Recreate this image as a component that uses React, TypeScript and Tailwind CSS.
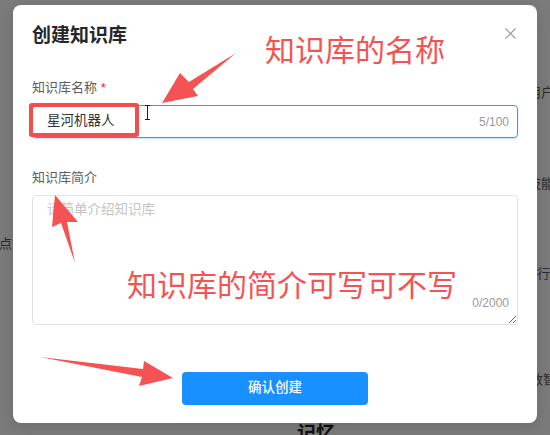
import React from 'react'

const RED = '#f55353'

export default function App() {
  return (
    <div className="relative w-[550px] h-[435px] overflow-hidden bg-[#7b7b7b] pl-[13px] pt-[5px] font-['Liberation_Sans','Noto_Sans_CJK_SC',sans-serif]">
      {/* page behind the overlay */}
      <div className="absolute inset-0 whitespace-nowrap text-[13px] text-[#2c2c2c]">
        <span className="absolute left-[-1px] top-[234px]">点</span>
        <span className="absolute left-[528px] top-[83px]">用户</span>
        <span className="absolute left-[528px] top-[174px]">技能</span>
        <span className="absolute left-[537px] top-[264px]">行编</span>
        <span className="absolute left-[530px] top-[370px]">数智</span>
        <span className="absolute left-[297px] top-[420px] text-[19px] font-bold text-[#111]">记忆</span>
      </div>

      {/* Modal */}
      <div className="relative w-[524px] h-[418px] rounded-lg bg-white px-[19px] pt-[19px] shadow-[0_4px_16px_rgba(0,0,0,0.12)]">
        <button className="absolute right-[21px] top-[22px] w-[12px] h-[12px] flex items-center justify-center" aria-label="关闭">
          <svg width="11" height="11" viewBox="0 0 11 11" fill="none">
            <path d="M0.5 0.5l10 10M10.5 0.5l-10 10" stroke="#9a9a9a" strokeWidth="1.1" />
          </svg>
        </button>

        <div className="text-[19px] leading-[24px] font-bold text-[#262626]">创建知识库</div>

        {/* Name */}
        <div className="mt-[30px] text-[13px] leading-[20px] text-[#5c5c5c]">
          知识库名称 <span className="text-[#f5222d]">*</span>
        </div>
        <div className="mt-[7px] h-[33px] flex items-center justify-between rounded-[4px] border border-[#4a94d6] pl-[14px] pr-[8px] shadow-[0_1px_2px_rgba(64,150,255,0.35)]">
          <span className="text-[13.5px] text-[#333]">星河机器人</span>
          <span className="text-[12px] text-[#999]">5/100</span>
        </div>

        {/* Description */}
        <div className="mt-[30px] text-[13px] leading-[20px] text-[#5c5c5c]">知识库简介</div>
        <div className="relative mt-[7px]">
          <textarea
            className="block w-full h-[130px] rounded-[4px] border border-[#e3e3e3] pl-[14px] pt-[4px] text-[13.5px] leading-[20px] text-[#333] outline-none placeholder:text-[#c4c4c4]"
            placeholder="请简单介绍知识库"
          />
          <span className="absolute right-[9px] bottom-[14px] text-[12px] leading-[16px] text-[#999]">0/2000</span>
        </div>

        <div className="mt-[47px] flex justify-center">
          <button className="w-[186px] h-[33px] rounded-[4px] bg-[#1890ff] text-white text-[13.5px] font-medium">
            确认创建
          </button>
        </div>
      </div>

      {/* Annotations */}
      <div className="absolute left-[29px] top-[103px] w-[110px] h-[34px] rounded-[3px] border-4 border-[#f24e4e]" />
      <div className="absolute left-[265px] top-[33px] whitespace-nowrap text-[30px] leading-[30px] font-['Noto_Sans_CJK_SC',sans-serif]" style={{ color: RED }}>
        知识库的名称
      </div>
      <div className="absolute left-[127px] top-[268px] whitespace-nowrap text-[30px] leading-[30px] font-['Noto_Sans_CJK_SC',sans-serif]" style={{ color: RED }}>
        知识库的简介可写可不写
      </div>
      <svg className="absolute inset-0 pointer-events-none" width="550" height="435" viewBox="0 0 550 435">
        {/* text cursor */}
        <path d="M145 105.5h5M147.5 105.5v14M145 119.5h5" stroke="#222" strokeWidth="1" fill="none" />
        {/* arrow to name input */}
        <polygon points="162,103 180,73 189,82 236,53 193,89 198,96" fill={RED} />
        {/* arrow to description */}
        <polygon points="55,195 52,227 61,223 75,263 67,222 78,222" fill={RED} />
        {/* arrow to button */}
        <polygon points="173,378 144,361 143,369 40,357 142,377 139,386" fill={RED} />
      </svg>
    </div>
  )
}
